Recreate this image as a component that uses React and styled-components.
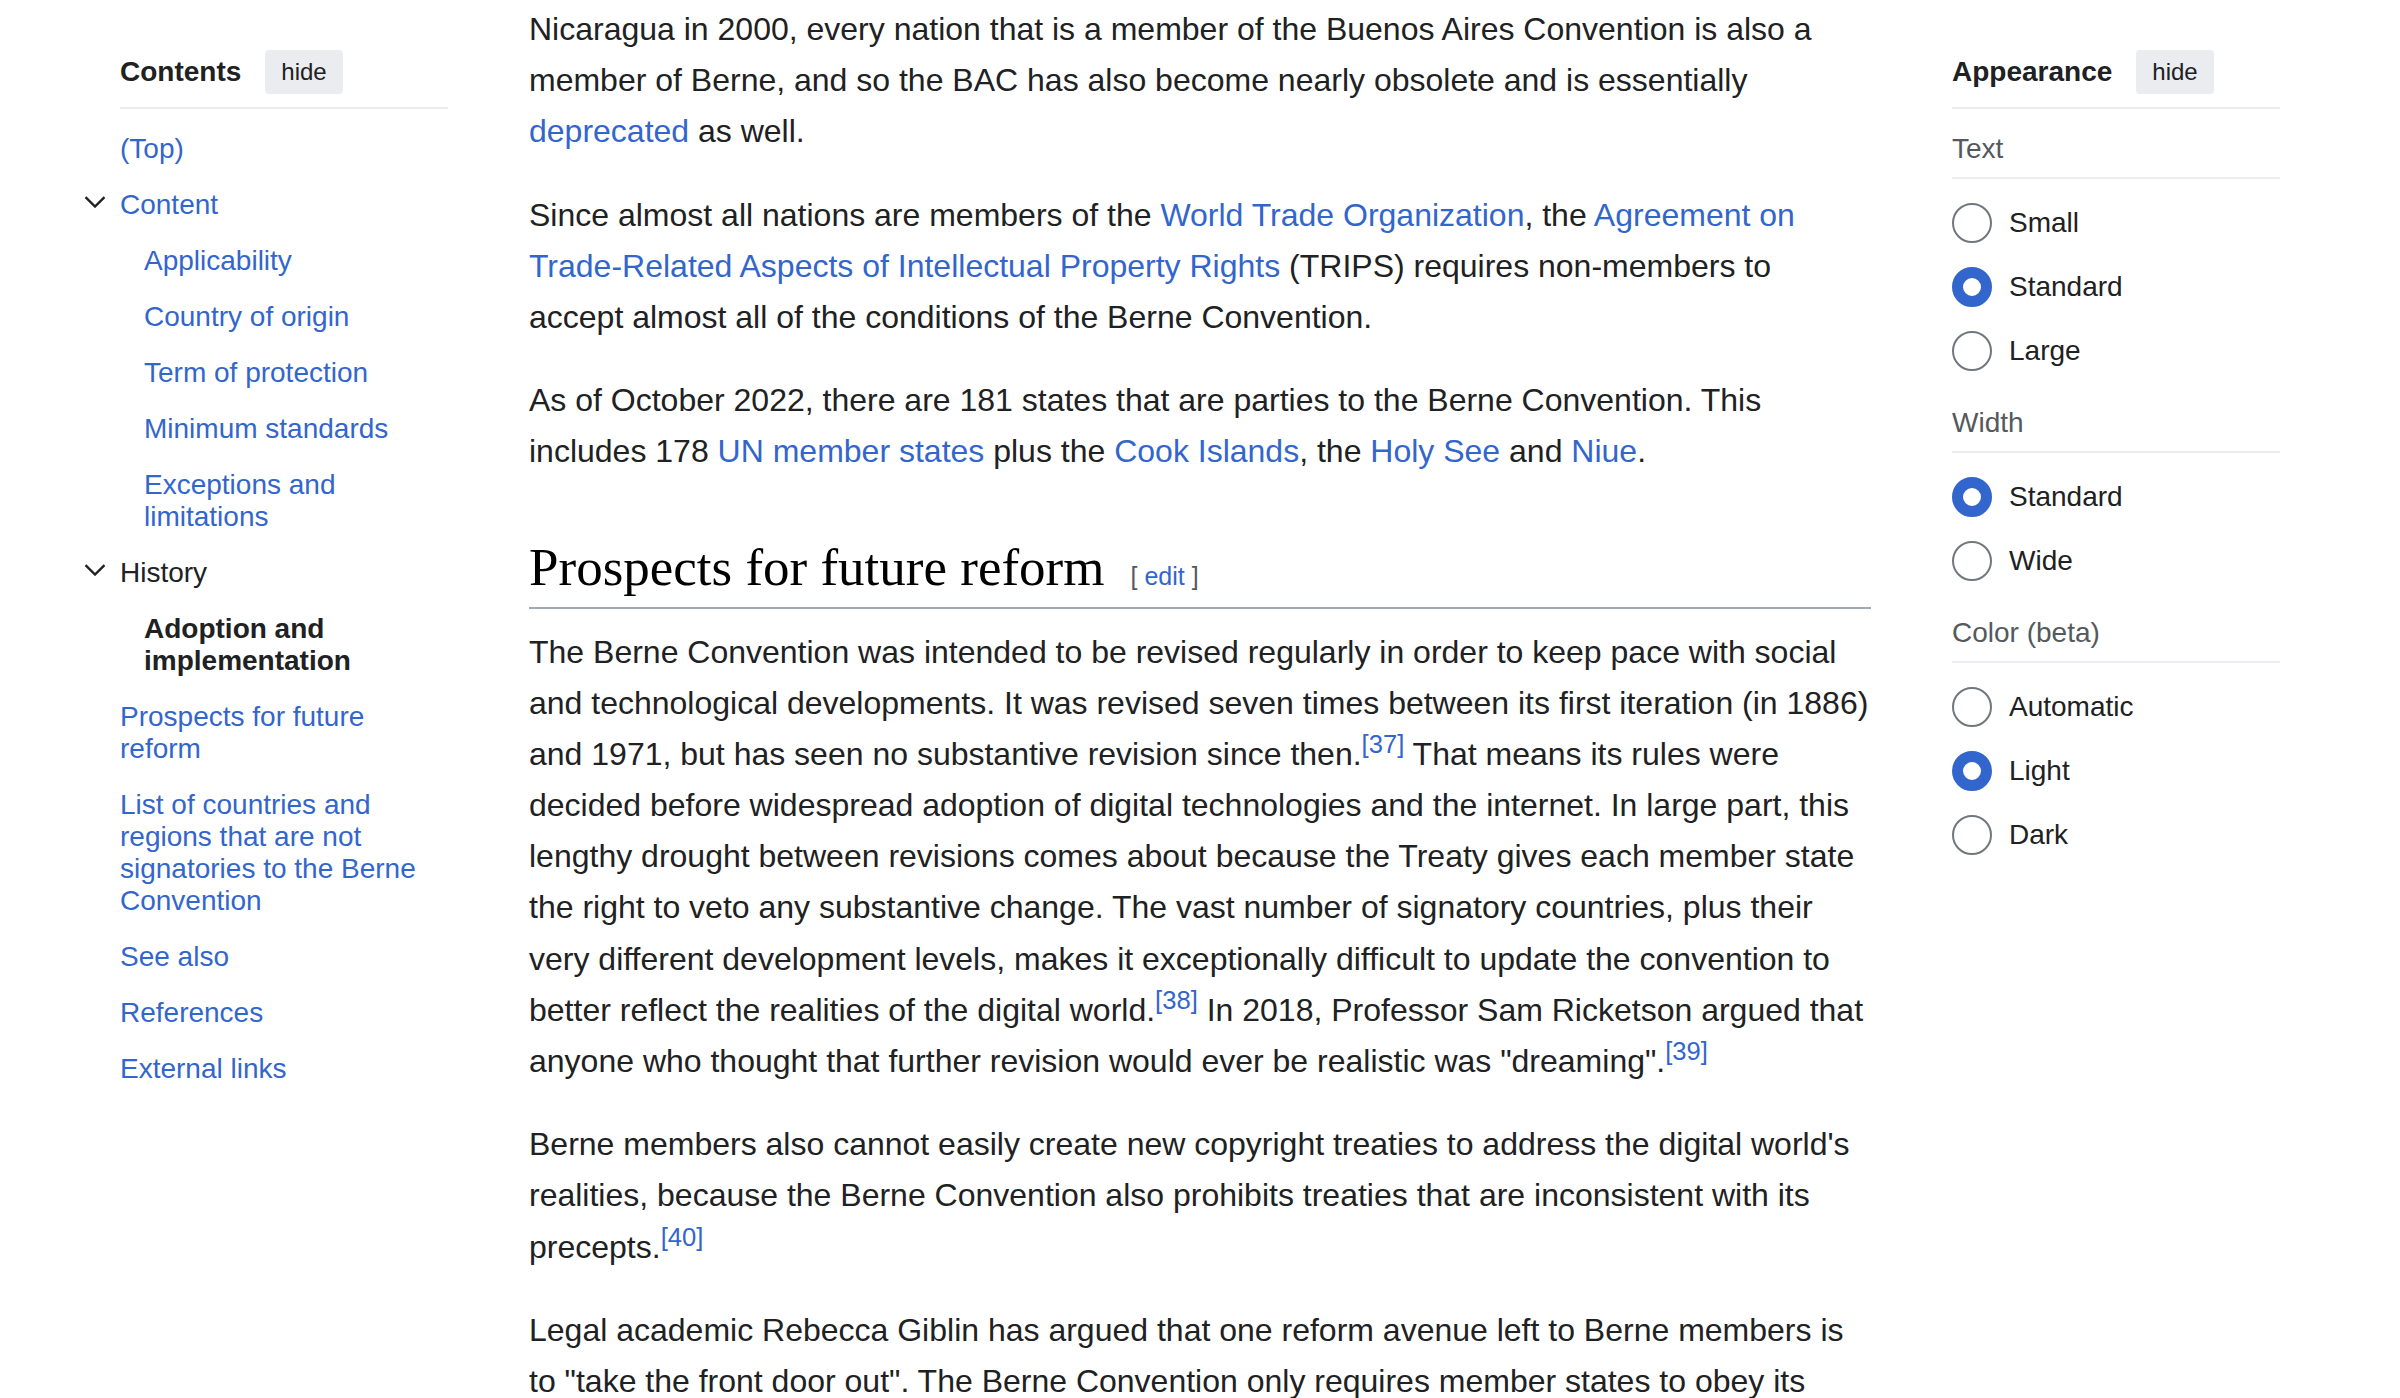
import React from 'react';
import styled, { createGlobalStyle } from 'styled-components';

const GlobalStyle = createGlobalStyle`
  html, body {
    margin: 0;
    padding: 0;
    background: #fff;
    overflow: hidden;
  }

  body {
    font-family: "Liberation Sans", Arial, Helvetica, sans-serif;
    color: #202122;
  }
`;

const Page = styled.div`
  display: grid;
  grid-template-columns: 328px 1342px 328px;
  column-gap: 81px;
  align-items: start;
  padding-left: 120px;
  height: 1398px;
  overflow: hidden;
`;

const Sidebar = styled.aside`
  padding-top: 50px;
`;

const PanelHeader = styled.div`
  display: flex;
  align-items: center;
  gap: 24px;
  padding-bottom: 13px;
  border-bottom: 2px solid #eaecf0;
`;

const PanelTitle = styled.div`
  font-size: 28px;
  line-height: 32px;
  font-weight: bold;
  color: #202122;
`;

const HideButton = styled.button`
  height: 44px;
  padding: 0 16px;
  border: none;
  border-radius: 4px;
  background: #eaecf0;
  color: #202122;
  font-family: inherit;
  font-size: 24px;
  line-height: 44px;
  cursor: pointer;
`;

const TocList = styled.ul`
  list-style: none;
  margin: 0;
  padding: 12px 0 0;
`;

const TocItem = styled.li`
  display: flex;
  align-items: flex-start;
  padding: 12px 0 12px ${({ $level }) => ($level === 2 ? '24px' : '0')};
  font-size: 28px;
  line-height: 32px;
`;

const TocLink = styled.a`
  text-decoration: none;
  color: ${({ $state }) => ($state === 'link' ? '#3366cc' : '#202122')};
  font-weight: ${({ $state }) => ($state === 'active' ? 'bold' : 'normal')};
`;

const Toggle = styled.span`
  display: flex;
  flex: none;
  width: 22px;
  margin: 7px 14px 0 -36px;
  color: #202122;
`;

const Main = styled.main`
  padding-top: 4px;
`;

const Para = styled.p`
  margin: 16px 0 32px;
  font-size: 32px;
  line-height: 1.6;
  color: #202122;

  &:first-child {
    margin-top: 0;
  }
`;

const Link = styled.a`
  color: #3366cc;
  text-decoration: none;
`;

const Ref = styled.sup`
  font-size: 80%;
  line-height: 1;
  vertical-align: super;
  color: #3366cc;
`;

const Heading = styled.h2`
  margin: 56px 0 18px;
  padding-bottom: 7px;
  border-bottom: 2px solid #a2a9b1;
  font-family: "Liberation Serif", "Times New Roman", serif;
  font-weight: normal;
  font-size: 53px;
  line-height: 66px;
  height: 66px;
  color: #000;
`;

const EditSection = styled.span`
  margin-left: 26px;
  font-family: "Liberation Sans", Arial, sans-serif;
  font-size: 25px;
  line-height: 1;
  color: #54595d;

  a {
    color: #3366cc;
    text-decoration: none;
    margin: 0 7px;
  }
`;

const Section = styled.div`
  padding-top: 24px;
`;

const SectionLabel = styled.div`
  padding-bottom: 12px;
  border-bottom: 2px solid #eaecf0;
  font-size: 28px;
  line-height: 32px;
  color: #54595d;
`;

const RadioList = styled.div`
  display: flex;
  flex-direction: column;
  gap: 24px;
  padding: 24px 0 12px;
`;

const RadioRow = styled.label`
  display: flex;
  align-items: center;
  gap: 17px;
  height: 40px;
  font-size: 28px;
  color: #202122;
`;

const RadioCircle = styled.span`
  box-sizing: border-box;
  width: 40px;
  height: 40px;
  border-radius: 50%;
  background: #fff;
  border: ${({ $checked }) => ($checked ? '11px solid #3366cc' : '2px solid #72777d')};
`;

const Chevron = () => (
  <svg width="22" height="12" viewBox="0 0 22 12" fill="none">
    <path d="M1.5 1.2 L11 10.5 L20.5 1.2" stroke="currentColor" strokeWidth="2.4" />
  </svg>
);

const toc = [
  { label: '(Top)', level: 1, state: 'link' },
  { label: 'Content', level: 1, state: 'link', toggle: true },
  { label: 'Applicability', level: 2, state: 'link' },
  { label: 'Country of origin', level: 2, state: 'link' },
  { label: 'Term of protection', level: 2, state: 'link' },
  { label: 'Minimum standards', level: 2, state: 'link' },
  { label: 'Exceptions and limitations', level: 2, state: 'link' },
  { label: 'History', level: 1, state: 'plain', toggle: true },
  { label: 'Adoption and implementation', level: 2, state: 'active' },
  { label: 'Prospects for future reform', level: 1, state: 'link' },
  { label: 'List of countries and regions that are not signatories to the Berne Convention', level: 1, state: 'link' },
  { label: 'See also', level: 1, state: 'link' },
  { label: 'References', level: 1, state: 'link' },
  { label: 'External links', level: 1, state: 'link' },
];

const appearance = [
  { title: 'Text', options: ['Small', 'Standard', 'Large'], selected: 'Standard' },
  { title: 'Width', options: ['Standard', 'Wide'], selected: 'Standard' },
  { title: 'Color (beta)', options: ['Automatic', 'Light', 'Dark'], selected: 'Light' },
];

const App = () => {
  return (
    <>
      <GlobalStyle />
      <Page>
        <Sidebar>
          <PanelHeader>
            <PanelTitle>Contents</PanelTitle>
            <HideButton>hide</HideButton>
          </PanelHeader>
          <TocList>
            {toc.map(item => (
              <TocItem key={item.label} $level={item.level}>
                {item.toggle && (
                  <Toggle>
                    <Chevron />
                  </Toggle>
                )}
                <TocLink href="#" $state={item.state}>{item.label}</TocLink>
              </TocItem>
            ))}
          </TocList>
        </Sidebar>

        <Main>
          <Para>
            Nicaragua in 2000, every nation that is a member of the Buenos Aires Convention is also a
            member of Berne, and so the BAC has also become nearly obsolete and is essentially{' '}
            <Link href="#">deprecated</Link> as well.
          </Para>
          <Para>
            Since almost all nations are members of the <Link href="#">World Trade Organization</Link>, the{' '}
            <Link href="#">Agreement on Trade-Related Aspects of Intellectual Property Rights</Link> (TRIPS)
            requires non-members to accept almost all of the conditions of the Berne Convention.
          </Para>
          <Para>
            As of October 2022, there are 181 states that are parties to the Berne Convention. This
            includes 178 <Link href="#">UN member states</Link> plus the <Link href="#">Cook Islands</Link>, the{' '}
            <Link href="#">Holy See</Link> and <Link href="#">Niue</Link>.
          </Para>

          <Heading>
            Prospects for future reform
            <EditSection>
              [<a href="#">edit</a>]
            </EditSection>
          </Heading>

          <Para>
            The Berne Convention was intended to be revised regularly in order to keep pace with social
            and technological developments. It was revised seven times between its first iteration (in 1886)
            and 1971, but has seen no substantive revision since then.<Ref>[37]</Ref> That means its rules
            were decided before widespread adoption of digital technologies and the internet. In large part,
            this lengthy drought between revisions comes about because the Treaty gives each member state the
            right to veto any substantive change. The vast number of signatory countries, plus their very
            different development levels, makes it exceptionally difficult to update the convention to better
            reflect the realities of the digital world.<Ref>[38]</Ref> In 2018, Professor Sam Ricketson argued
            that anyone who thought that further revision would ever be realistic was "dreaming".<Ref>[39]</Ref>
          </Para>
          <Para>
            Berne members also cannot easily create new copyright treaties to address the digital world's
            realities, because the Berne Convention also prohibits treaties that are inconsistent with its
            precepts.<Ref>[40]</Ref>
          </Para>
          <Para>
            Legal academic Rebecca Giblin has argued that one reform avenue left to Berne members is to
            "take the front door out". The Berne Convention only requires member states to obey its rules
            when protecting works from other member states, leaving them free to treat their own authors
            differently.
          </Para>
        </Main>

        <Sidebar>
          <PanelHeader>
            <PanelTitle>Appearance</PanelTitle>
            <HideButton>hide</HideButton>
          </PanelHeader>
          {appearance.map(group => (
            <Section key={group.title}>
              <SectionLabel>{group.title}</SectionLabel>
              <RadioList>
                {group.options.map(option => (
                  <RadioRow key={option}>
                    <RadioCircle $checked={option === group.selected} />
                    {option}
                  </RadioRow>
                ))}
              </RadioList>
            </Section>
          ))}
        </Sidebar>
      </Page>
    </>
  );
};

export default App;
